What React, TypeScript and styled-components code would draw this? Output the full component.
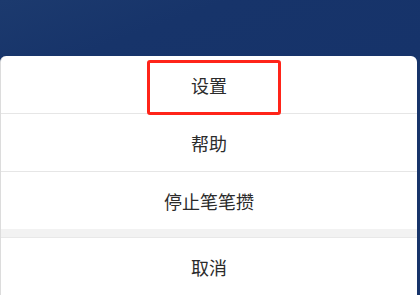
import React from 'react';
import styled, { createGlobalStyle } from 'styled-components';

const GlobalStyle = createGlobalStyle`
  html, body {
    margin: 0;
    padding: 0;
    background: #f2f2f2;
  }
  body {
    font-family: "Noto Sans CJK SC", "Liberation Sans", sans-serif;
  }
`;

const Screen = styled.div`
  width: 420px;
  height: 295px;
  overflow: hidden;
  display: flex;
  flex-direction: column;
  background: #17346a;
`;

const Header = styled.div`
  height: 56px;
  flex-shrink: 0;
  background: linear-gradient(160deg, #1c3a6e 0%, #17346a 40%, #16336a 100%);
`;

const Sheet = styled.div`
  position: relative;
  flex: 1;
  margin: 0 3px 0 0;
  background: #ffffff;
  border-left: 1px solid #dcdcdc;
  border-radius: 6px 6px 0 0;
  display: flex;
  flex-direction: column;
`;

const Row = styled.div<{ $divider?: boolean }>`
  height: 57px;
  display: flex;
  align-items: center;
  justify-content: center;
  font-size: 18px;
  color: #2b2b2b;
  border-bottom: ${(p) => (p.$divider ? '1px solid #e6e6e6' : 'none')};
`;

const Gap = styled.div`
  height: 8px;
  background: #f2f2f2;
  border-bottom: 1px solid #e8e8e8;
`;

const Highlight = styled.div`
  position: absolute;
  left: 146px;
  top: 4px;
  width: 128px;
  height: 49px;
  border: 3px solid #ff2419;
  border-radius: 3px;
  pointer-events: none;
`;

export default function App() {
  return (
    <>
      <GlobalStyle />
      <Screen>
        <Header />
        <Sheet>
          <Row $divider>设置</Row>
          <Row $divider>帮助</Row>
          <Row>停止笔笔攒</Row>
          <Gap />
          <Row>取消</Row>
          <Highlight />
        </Sheet>
      </Screen>
    </>
  );
}
